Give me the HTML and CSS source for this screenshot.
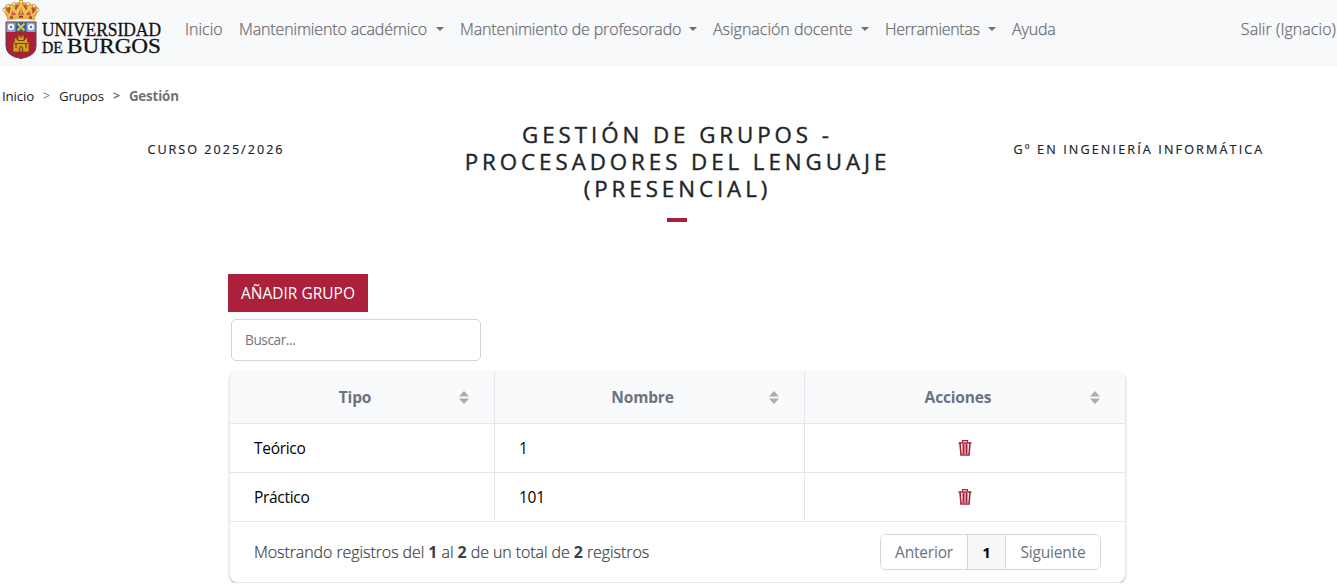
FILE: index.html
```html
<!DOCTYPE html>
<html lang="es">
<head>
<meta charset="utf-8">
<title>Gestión de grupos</title>
<link rel="stylesheet" href="styles.css">
</head>
<body>
<header class="navbar">
  <a class="brand" aria-label="Universidad de Burgos">
    <svg class="crest" viewBox="0 0 38 59" width="38" height="59">
      <path d="M5 18 L1 9 Q4 4 9 4 L17 2 V0 H21 V2 L29 4 Q34 4 37 9 L33 18Z" fill="#d9a441"/>
      <path d="M7 17 L4 9 L9 6 L11 15 L14 5 H17 L18 14 H20 L21 5 H24 L27 15 L29 6 L34 9 L31 17Z" fill="#c8464a"/>
      <path d="M2 9 L8 16 L10 6 L15 15 L19 4 L23 15 L28 6 L30 16 L36 9M8 6L14 12L19 4L24 12L30 6" fill="none" stroke="#eec44f" stroke-width="1.900"/>
      <g fill="#fff2b0" stroke="#a66c23" stroke-width=".5"><circle cx="2.500" cy="10" r="1.600"/><circle cx="6" cy="6" r="1.600"/><circle cx="12" cy="4" r="1.600"/><circle cx="19" cy="2" r="1.700"/><circle cx="26" cy="4" r="1.600"/><circle cx="32" cy="6" r="1.600"/><circle cx="35.500" cy="10" r="1.600"/></g>
      <path d="M5 16 Q19 13 33 16 V20.500 Q19 18 5 20.500Z" fill="#e3b64e"/>
      <path d="M8 17.500h3M17 16.800h4M27 17.500h3" stroke="#b72232" stroke-width="2"/>
      <path d="M4 22 H34 V46 Q34 56 19 58.500 Q4 56 4 46Z" fill="#ab2038" stroke="#60404b" stroke-width="1"/>
      <path d="M4.500 22.500H33.500V32H4.500Z" fill="#7fa5ce"/>
      <path d="M13.500 22.500H24.500V32H13.500Z" fill="#2c5f98"/>
      <g fill="#f2f6fa"><circle cx="9" cy="27" r="3.200"/><circle cx="29" cy="27" r="3.200"/></g>
      <g fill="#4d78a8"><circle cx="9" cy="27" r="1.200"/><circle cx="29" cy="27" r="1.200"/></g>
      <path d="M15.500 23.500L22.500 30.500M22.500 23.500L15.500 30.500" stroke="#e9bd49" stroke-width="2"/>
      <path d="M11 52V42H12.500V38H15V40H16V35H18V37H20V35H22V40H23V38H25.500V42H27V52Z" fill="#d7a022" stroke="#6d411b" stroke-width=".8"/>
      <path d="M17.500 52V48Q19 45 20.500 48V52M14 44V48M24 44V48M16 40.500H22M12 43.500H26" fill="none" stroke="#704318" stroke-width="1.200"/>
    </svg>
    <svg class="wordmark" viewBox="0 0 122 40" width="122" height="40">
      <text x="0" y="15.500" font-size="18" textLength="119" lengthAdjust="spacingAndGlyphs">UNIVERSIDAD</text>
      <text x="0" y="32.800" font-size="16.500" textLength="21" lengthAdjust="spacingAndGlyphs">DE</text>
      <text x="25" y="32.800" font-size="20" textLength="94" lengthAdjust="spacingAndGlyphs">BURGOS</text>
    </svg>
  </a>
  <nav class="menu">
    <a class="link w-inicio">Inicio</a>
    <a class="link w-academico">Mantenimiento académico<i class="caret"></i></a>
    <a class="link w-profesorado">Mantenimiento de profesorado<i class="caret"></i></a>
    <a class="link w-docente">Asignación docente<i class="caret"></i></a>
    <a class="link w-herramientas">Herramientas<i class="caret"></i></a>
    <a class="link">Ayuda</a>
  </nav>
  <a class="link logout">Salir (Ignacio)</a>
</header>

<nav class="crumbs">
  <a>Inicio</a><span class="sep">&gt;</span><a>Grupos</a><b class="sep">&gt;</b><b>Gestión</b>
</nav>

<section class="heading">
  <div class="side course">Curso 2025/2026</div>
  <h1 class="title">Gestión de grupos -<br>Procesadores del lenguaje<br>(Presencial)</h1>
  <div class="side degree">Gº en Ingeniería Informática</div>
</section>

<main class="content">
  <button class="add">AÑADIR GRUPO</button>
  <input class="search" type="text" placeholder="Buscar...">
  <div class="grid">
    <div class="row head">
      <div class="cell">Tipo<svg class="sort" viewBox="0 0 10 13"><path d="M5 0L10 5.500H0ZM0 7.500H10L5 13Z"/></svg></div>
      <div class="cell">Nombre<svg class="sort" viewBox="0 0 10 13"><path d="M5 0L10 5.500H0ZM0 7.500H10L5 13Z"/></svg></div>
      <div class="cell">Acciones<svg class="sort" viewBox="0 0 10 13"><path d="M5 0L10 5.500H0ZM0 7.500H10L5 13Z"/></svg></div>
    </div>
    <div class="row">
      <div class="cell">Teórico</div>
      <div class="cell">1</div>
      <div class="cell action"><svg class="trash" viewBox="0 0 14 16"><path d="M4.500 2.500V.6H9.500V2.500" stroke-width="1.100"/><path d="M.5 3H13.500M2 3L3 15H11L12 3M5.300 4V14M8.700 4V14"/><path d="M7 4V14" stroke-width="1"/></svg></div>
    </div>
    <div class="row">
      <div class="cell">Práctico</div>
      <div class="cell">101</div>
      <div class="cell action"><svg class="trash" viewBox="0 0 14 16"><path d="M4.500 2.500V.6H9.500V2.500" stroke-width="1.100"/><path d="M.5 3H13.500M2 3L3 15H11L12 3M5.300 4V14M8.700 4V14"/><path d="M7 4V14" stroke-width="1"/></svg></div>
    </div>
    <div class="footer">
      <div class="summary">Mostrando registros del <b>1</b> al <b>2</b> de un total de <b>2</b> registros</div>
      <div class="pages"><button class="prev">Anterior</button><button class="current">1</button><button class="next">Siguiente</button></div>
    </div>
  </div>
</main>
</body>
</html>
```
FILE: styles.css
```css
* { box-sizing: border-box; }
body { margin: 0; font-family: "Open Sans", "Noto Sans", sans-serif; font-size: 16px; color: #212529; background: #fff; overflow: hidden; }
button, input { font: inherit; }
.navbar { display: flex; height: 67px; background: #f8f9fb; }
.brand { display: flex; width: 185px; padding-left: 2px; }
.wordmark { margin: 20px 0 0 2px; font-family: "Liberation Serif", serif; fill: #111; stroke: #111; stroke-width: .3px; overflow: visible; }
.menu { display: flex; }
.link { display: flex; align-items: center; height: 58px; line-height: 24px; color: #6c6d70; font-weight: 300; -webkit-text-stroke: .25px; letter-spacing: -.15px; white-space: nowrap; }
.caret { width: 0; height: 0; margin-left: auto; border: 4.5px solid transparent; border-top: 4.5px solid #6d6e70; border-bottom: 0; }
.w-inicio { width: 54px; letter-spacing: 0; }
.w-academico { width: 221px; padding-right: 16px; }
.w-profesorado { width: 253px; padding-right: 16px; }
.w-docente { width: 172px; padding-right: 16px; letter-spacing: -.02px; }
.w-herramientas { width: 127px; padding-right: 16px; letter-spacing: -.33px; }
.logout { margin-left: auto; padding-right: 1px; letter-spacing: .05px; }
.crumbs { display: flex; height: 60px; padding: 19px 0 0 2px; font-size: 13.3px; line-height: 20px; letter-spacing: -.15px; }
.crumbs b { color: #6c757d; }
.crumbs .sep { margin: 0 9px; font-size: 12.5px; color: #6c757d; }
.heading { display: grid; grid-template-columns: 431px 491px 415px; height: 147px; margin-top: -6px; text-align: center; text-transform: uppercase; }
.side { padding-top: 20px; font-size: 12.6px; -webkit-text-stroke: .2px; line-height: 18px; letter-spacing: 2px; }
.course { padding-left: 1px; }
.degree { padding-left: 19px; letter-spacing: 2.13px; }
.title { margin: 0; font-size: 22.3px; line-height: 27px; font-weight: 400; -webkit-text-stroke: .4px; letter-spacing: 3.95px; padding-left: 2px; }
.title::after { content: ""; display: block; width: 20px; height: 4px; margin: 16px 0 0 234px; background: #a9203a; }
.content { width: 898px; margin: 6px 0 0 228px; }
.add { display: block; width: 140px; height: 38px; padding: 0; border: 0; background: #ab203b; color: #fff; font-size: 15.5px; letter-spacing: 0; }
.search { display: block; width: 250px; height: 42px; margin: 7px 0 10px 3px; padding: 0 13px 2px; border: 1px solid #d2d6dc; border-radius: 5px; font-size: 13.6px; letter-spacing: -.4px; }
.search::placeholder { color: #757575; }
.grid { width: 897px; margin-left: 1px; overflow: hidden; border: 1px solid #e5e7eb; border-top: 0; border-radius: 9px; box-shadow: 0 1px 3px rgba(0,0,0,.08), 0 1px 1px rgba(0,0,0,.24); }
.row { display: grid; grid-template-columns: 265px 310px 1fr; height: 49px; border-bottom: 1px solid #e5e7eb; color: #000; font-size: 15.5px; letter-spacing: -.3px; }
.cell { display: flex; align-items: center; padding: 0 24px; border-right: 1px solid #e5e7eb; }
.cell:last-child { border-right: 0; }
.row.head { height: 53px; background: #f9fafb; color: #6b7280; font-weight: 700; font-size: 15.5px; letter-spacing: -.15px; }
.head .cell { display: grid; grid-template-columns: 1fr 10px; padding: 0 25px 0 21px; text-align: center; }
.sort { width: 10px; height: 13px; fill: #adadad; }
.action { justify-content: center; }
.trash { width: 14px; height: 16px; fill: none; stroke: #a9203a; stroke-width: 1.6; }
.footer { display: flex; justify-content: space-between; align-items: center; height: 60px; padding: 0 24px; }
.summary { color: #3d4045; font-weight: 300; -webkit-text-stroke: .2px; letter-spacing: -.08px; padding-bottom: 1px; }
.summary b { font-weight: 700; -webkit-text-stroke: 0; }
.pages { display: flex; height: 36px; border: 1px solid #d2d6dc; border-radius: 6px; overflow: hidden; }
.pages button { padding: 0; border: 0; border-right: 1px solid #d2d6dc; background: #fff; color: #6b7280; font-size: 15.5px; letter-spacing: -.2px; }
.pages .prev { width: 87px; }
.pages .current { width: 38px; background: #f7f7f7; color: #000; font-weight: 700; font-size: 15px; }
.pages .next { width: 94px; border-right: 0; }
```
